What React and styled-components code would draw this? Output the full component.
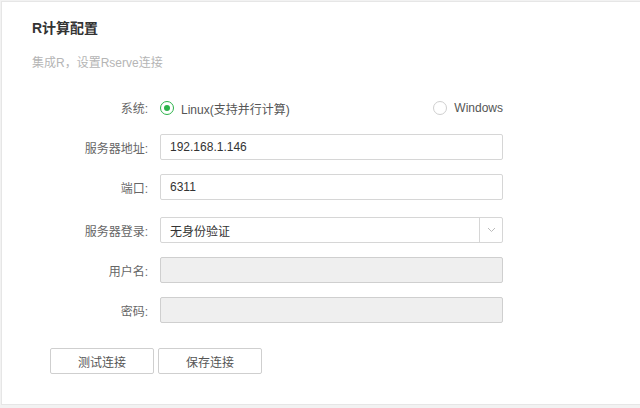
import React, { useState } from 'react'
import styled, { createGlobalStyle } from 'styled-components'

const GlobalStyle = createGlobalStyle`
    html, body {
        margin: 0;
        padding: 0;
        background: #f2f2f2;
    }
    body {
        font-family: "Liberation Sans", "Noto Sans CJK SC", sans-serif;
        font-size: 12px;
        color: #555;
    }
`

const Page = styled.div`
    padding: 1px 0 0 1px;
    height: 408px;
    box-sizing: border-box;
`

const Panel = styled.div`
    height: 404px;
    box-sizing: border-box;
    background: #fff;
    border: 1px solid #e6e6e6;
    border-right: none;
    padding: 16px 0 0 30px;
`

const Title = styled.h3`
    margin: 0;
    font-size: 14px;
    line-height: 20px;
    font-weight: bold;
    color: #333;
`

const SubTitle = styled.p`
    margin: 15px 0 0;
    font-size: 12px;
    line-height: 20px;
    color: #b5b5b5;
`

const Form = styled.div`
    margin-top: 21px;
    display: flex;
    flex-direction: column;
    gap: 14px;
`

const Row = styled.div`
    display: flex;
    align-items: center;
    gap: 12px;
    height: 26px;
    margin-top: ${p => p.$extra || 0}px;
`

const Label = styled.label`
    width: 116px;
    text-align: right;
    color: #666;
    font-size: 12px;
    flex-shrink: 0;
`

const RadioGroup = styled.div`
    width: 343px;
    padding-top: 2px;
    display: flex;
    align-items: center;
    justify-content: space-between;
`

const RadioItem = styled.div`
    display: flex;
    align-items: center;
    gap: 7px;
    cursor: pointer;
    color: #555;
`

const Circle = styled.span`
    width: 14px;
    height: 14px;
    box-sizing: border-box;
    border-radius: 50%;
    border: 1px solid ${p => (p.$on ? '#2cb34a' : '#cfcfcf')};
    display: flex;
    align-items: center;
    justify-content: center;

    &::after {
        content: '';
        width: 6px;
        height: 6px;
        border-radius: 50%;
        background: ${p => (p.$on ? '#2cb34a' : 'transparent')};
    }
`

const Input = styled.input`
    width: 343px;
    height: 26px;
    box-sizing: border-box;
    border: 1px solid ${p => (p.disabled ? '#cfcfcf' : '#d6d6d6')};
    border-radius: 2px;
    background: ${p => (p.disabled ? '#efefef' : '#fff')};
    padding: 0 9px;
    font-family: inherit;
    font-size: 12px;
    color: #333;
    outline: none;
`

const Select = styled.div`
    width: 343px;
    height: 26px;
    box-sizing: border-box;
    border: 1px solid #d6d6d6;
    border-radius: 2px;
    display: flex;
    align-items: stretch;
    color: #333;
`

const SelectValue = styled.span`
    flex: 1;
    display: flex;
    align-items: center;
    padding-left: 9px;
`

const Arrow = styled.span`
    width: 22px;
    border-left: 1px solid #d6d6d6;
    display: flex;
    align-items: center;
    justify-content: center;
`

const Buttons = styled.div`
    display: flex;
    gap: 4px;
    margin: 25px 0 0 18px;
`

const Button = styled.button`
    width: 104px;
    height: 26px;
    box-sizing: border-box;
    border: 1px solid #cfcfcf;
    border-radius: 2px;
    background: #fff;
    font-family: inherit;
    font-size: 12px;
    color: #555;
    cursor: pointer;
`

const App = () => {
    const [os, setOs] = useState('linux')

    return (
        <>
            <GlobalStyle />
            <Page>
                <Panel>
                    <Title>R计算配置</Title>
                    <SubTitle>集成R，设置Rserve连接</SubTitle>
                    <Form>
                        <Row>
                            <Label>系统:</Label>
                            <RadioGroup>
                                <RadioItem onClick={() => setOs('linux')}>
                                    <Circle $on={os === 'linux'} />
                                    Linux(支持并行计算)
                                </RadioItem>
                                <RadioItem onClick={() => setOs('windows')}>
                                    <Circle $on={os === 'windows'} />
                                    Windows
                                </RadioItem>
                            </RadioGroup>
                        </Row>
                        <Row>
                            <Label>服务器地址:</Label>
                            <Input defaultValue="192.168.1.146" />
                        </Row>
                        <Row>
                            <Label>端口:</Label>
                            <Input defaultValue="6311" />
                        </Row>
                        <Row $extra={3}>
                            <Label>服务器登录:</Label>
                            <Select>
                                <SelectValue>无身份验证</SelectValue>
                                <Arrow>
                                    <svg width="9" height="6" viewBox="0 0 9 6">
                                        <path d="M1 1l3.5 3.5L8 1" fill="none" stroke="#bbb" strokeWidth="1" />
                                    </svg>
                                </Arrow>
                            </Select>
                        </Row>
                        <Row>
                            <Label>用户名:</Label>
                            <Input disabled />
                        </Row>
                        <Row>
                            <Label>密码:</Label>
                            <Input disabled type="password" />
                        </Row>
                    </Form>
                    <Buttons>
                        <Button>测试连接</Button>
                        <Button>保存连接</Button>
                    </Buttons>
                </Panel>
            </Page>
        </>
    )
}

export default App
